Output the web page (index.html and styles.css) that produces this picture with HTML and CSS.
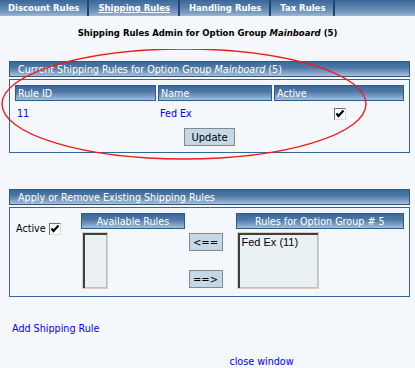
FILE: index.html
```html
<!DOCTYPE html>
<html>
<head>
<meta charset="utf-8">
<link rel="stylesheet" href="styles.css">
</head>
<body>
<nav class="tabs">
  <a class="tab">Discount Rules</a>
  <a class="tab active">Shipping Rules</a>
  <a class="tab">Handling Rules</a>
  <a class="tab">Tax Rules</a>
</nav>
<h1 class="title">Shipping Rules Admin for Option Group <i>Mainboard</i> (5)</h1>

<section class="panel panel-current">
  <div class="bar">Current Shipping Rules for Option Group <i>Mainboard</i> (5)</div>
  <div class="box">
    <div class="grid">
      <div class="bar colhead">Rule ID</div>
      <div class="bar colhead">Name</div>
      <div class="bar colhead">Active</div>
      <a class="cell link">11</a>
      <a class="cell link">Fed Ex</a>
      <div class="cell center"><span class="check"><svg width="10" height="10" viewBox="0 0 10 10"><path d="M1.5 4.5 L3.5 7 L8.5 1.5" fill="none" stroke="#000" stroke-width="2.2"/></svg></span></div>
    </div>
    <div class="actions"><button class="btn">Update</button></div>
  </div>
  <svg class="ellipse" width="415" height="120" viewBox="0 0 415 120"><ellipse cx="184" cy="55" rx="182" ry="55" fill="none" stroke="#ee1c1c" stroke-width="1.4"/></svg>
</section>

<section class="panel panel-apply">
  <div class="bar">Apply or Remove Existing Shipping Rules</div>
  <div class="box apply">
    <div class="active-field">Active <span class="check"><svg width="10" height="10" viewBox="0 0 10 10"><path d="M1.5 4.5 L3.5 7 L8.5 1.5" fill="none" stroke="#000" stroke-width="2.2"/></svg></span></div>
    <div class="col col-avail">
      <div class="bar colhead centered">Available Rules</div>
      <div class="listbox narrow"></div>
    </div>
    <div class="col col-move">
      <button class="btn move">&lt;==</button>
      <button class="btn move">==&gt;</button>
    </div>
    <div class="col col-group">
      <div class="bar colhead centered">Rules for Option Group # 5</div>
      <div class="listbox wide">Fed Ex (11)</div>
    </div>
  </div>
</section>

<a class="link add">Add Shipping Rule</a>
<div class="footer"><a class="link">close window</a></div>
</body>
</html>
```

FILE: styles.css
```css
html, body {
  margin: 0;
  padding: 0;
  background: #f4f7fb;
  font-family: "DejaVu Sans", Verdana, sans-serif;
  font-size: 9.6px;
  color: #000;
}
.tabs {
  display: flex;
  height: 16px;
  align-items: stretch;
  background: linear-gradient(#3a6798 0%, #5a82ad 45%, #7d9ec3 80%, #9fb8d4 100%);
}
.tab {
  color: #fff;
  font-weight: bold;
  font-size: 8.5px;
  line-height: 16px;
  padding: 0 8px 0 9px;
  border-right: 2px solid #25456e;
  white-space: nowrap;
}
.tab:first-child { padding-left: 8px; }
.tab.active { text-decoration: underline; }
.title {
  margin: 0;
  padding: 11px 0 0;
  height: 24px;
  text-align: center;
  font-size: 8.5px;
  font-weight: bold;
  line-height: 12px;
}
.panel {
  position: relative;
  margin: 0 5px 0 9px;
}
.panel-current { margin-top: 10px; }
.panel-apply { margin-top: 36px; }
.bar {
  height: 16px;
  line-height: 16px;
  color: #fff;
  padding-left: 8px;
  background: linear-gradient(#3c6898 0%, #4e78a6 40%, #7f9fc4 75%, #a7bfd9 100%);
  border: 1px solid #2e5b8c;
  box-sizing: border-box;
  white-space: nowrap;
}
.box {
  margin-top: 2px;
  border: 1px solid #336699;
  padding: 5px 5px 6px;
}
.grid {
  display: grid;
  grid-template-columns: 141px 114px 1fr;
  column-gap: 2px;
}
.colhead { padding-left: 2px; }
.cell {
  height: 26px;
  line-height: 26px;
  padding-left: 2px;
}
.center { display: flex; align-items: center; justify-content: center; }
.link { color: #0000ff; }
.check {
  display: inline-flex;
  align-items: center;
  justify-content: center;
  width: 10px;
  height: 10px;
  border: 1px solid #707070;
  border-right-color: #d8d8d8;
  border-bottom-color: #d8d8d8;
  background: #fff;
}
.actions {
  display: flex;
  justify-content: center;
  padding-top: 1px;
}
.btn {
  font-family: "DejaVu Sans", Verdana, sans-serif;
  font-size: 10px;
  background: #c5d8e8;
  border: 1px solid #888;
  height: 18px;
  padding: 0 6px;
  color: #000;
}
.ellipse {
  position: absolute;
  left: -9px;
  top: -12px;
  pointer-events: none;
}
.apply {
  display: flex;
  padding: 5px 5px 6px 6px;
  height: 77px;
}
.active-field {
  display: flex;
  align-items: flex-start;
  gap: 3px;
  width: 66px;
  padding-top: 10px;
  line-height: 12px;
}
.col { display: flex; flex-direction: column; }
.col-avail { width: 104px; }
.col-move { width: 34px; margin-left: 4px; gap: 19px; padding-top: 20px; }
.col-group { width: 170px; margin-left: 13px; }
.centered { padding-left: 0; text-align: center; }
.move { height: 18px; padding: 0; width: 34px; }
.listbox {
  margin-top: 3px;
  height: 57px;
  box-sizing: border-box;
  background: #eaf1f5;
  border: 1px solid #d4d0c8;
  box-shadow: inset 2px 2px 0 #404040, inset -1px -1px 0 #c0c0c0;
  padding: 3px 4px;
  font-family: "Liberation Sans", Arial, sans-serif;
  font-size: 11px;
}
.narrow { width: 26px; margin-left: 1px; }
.wide { width: 82px; margin-left: 1px; }
.add {
  display: block;
  margin: 26px 0 0 12px;
}
.footer {
  text-align: center;
  margin-top: 22px;
  padding-left: 108px;
}
```
